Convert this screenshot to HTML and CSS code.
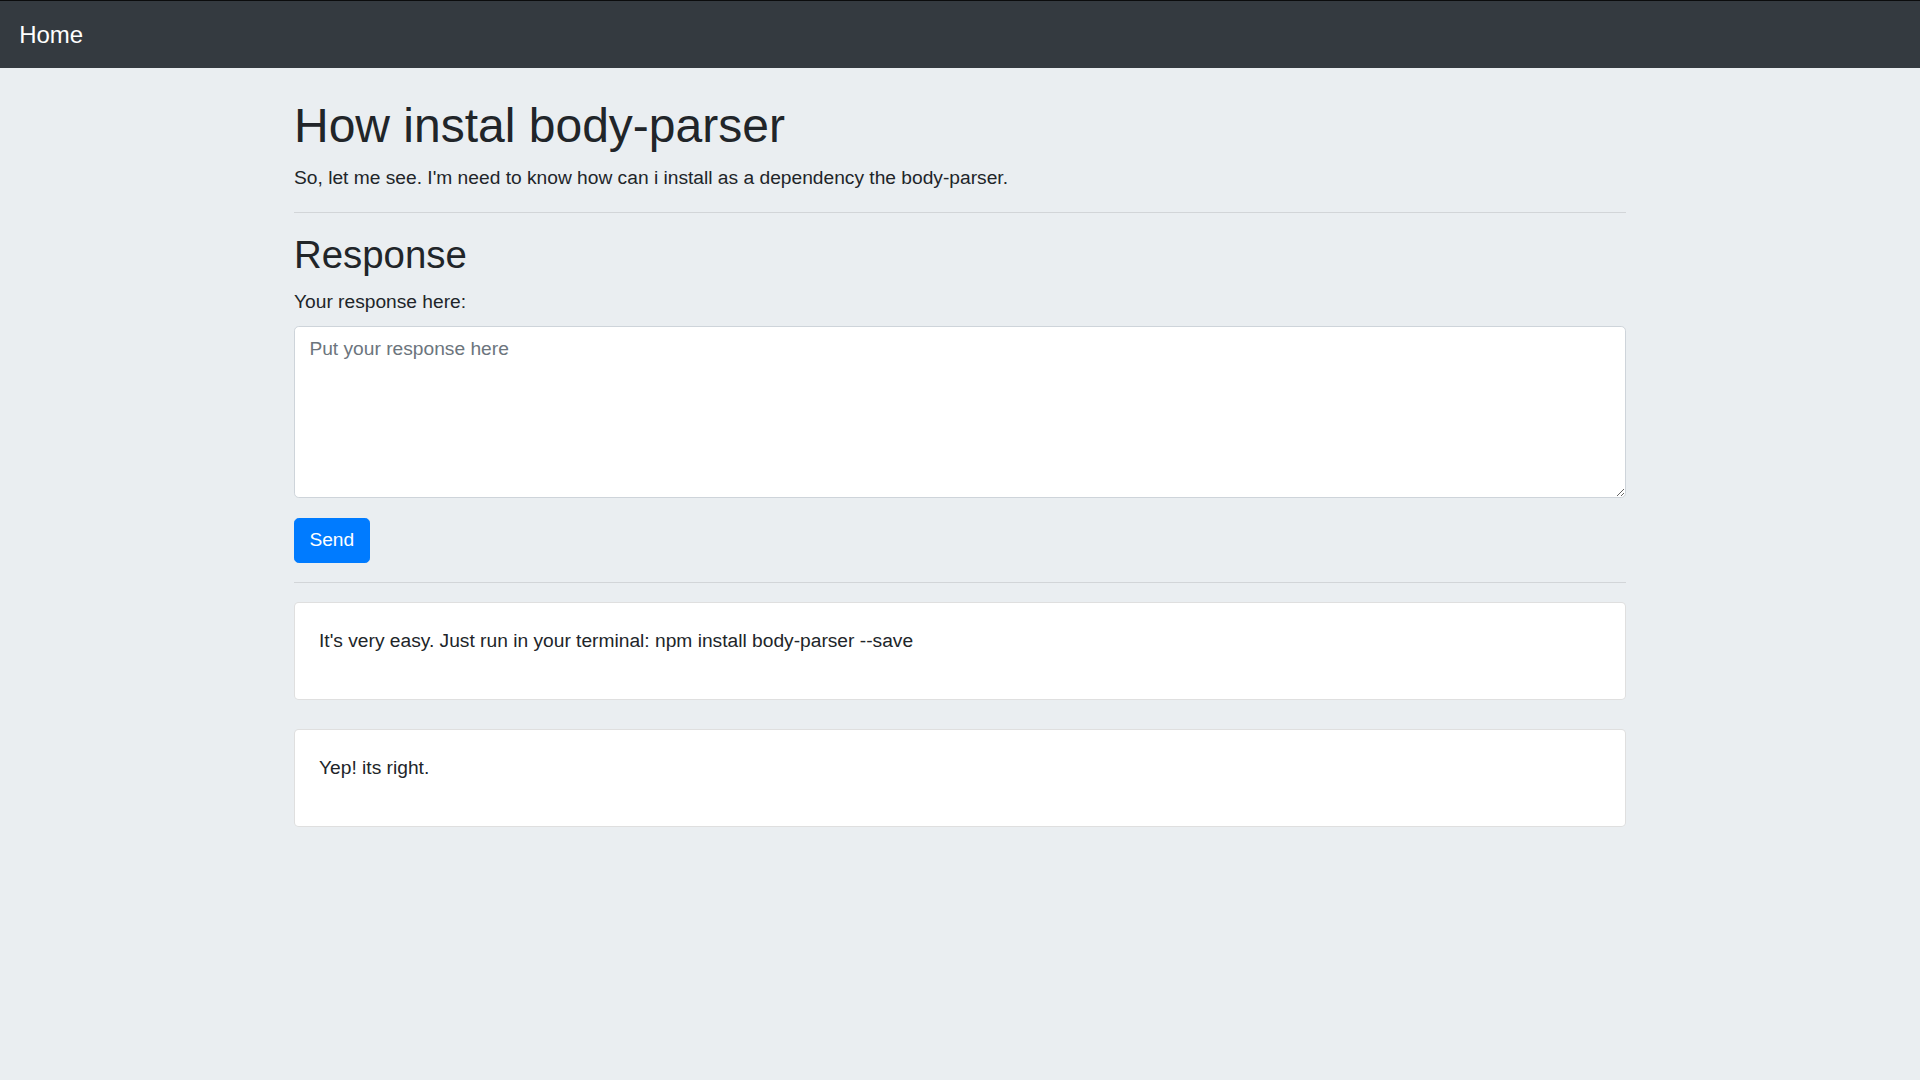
FILE: index.html
```html
<!DOCTYPE html>
<html lang="en">
<head>
<meta charset="utf-8">
<title>How instal body-parser</title>
<link rel="stylesheet" href="styles.css">
</head>
<body>
<nav class="navbar">
  <a class="navbar-brand" href="#">Home</a>
</nav>
<main class="container">
  <h1 class="title">How instal body-parser</h1>
  <p class="text">So, let me see. I'm need to know how can i install as a dependency the body-parser.</p>
  <hr class="divider">
  <h2 class="subtitle">Response</h2>
  <form class="form">
    <div class="form-group">
      <label class="label" for="response">Your response here:</label>
      <textarea class="form-control" id="response" placeholder="Put your response here"></textarea>
    </div>
    <button class="btn" type="button">Send</button>
  </form>
  <hr class="divider">
  <div class="card">
    <div class="card-body">
      <p class="text">It's very easy. Just run in your terminal: npm install body-parser --save</p>
    </div>
  </div>
  <div class="card">
    <div class="card-body">
      <p class="text">Yep! its right.</p>
    </div>
  </div>
</main>
</body>
</html>
```

FILE: styles.css
```css
* {
  box-sizing: border-box;
}

html, body {
  margin: 0;
  padding: 0;
}

body {
  background: #eaeef1;
  color: #212529;
  font-family: "Liberation Sans", Arial, sans-serif;
  font-size: 19.2px;
  line-height: 1.5;
  min-height: 1080px;
}

.navbar {
  background: #343a40;
  border-top: 1px solid #0b0c0d;
  padding: 9.6px 19.2px;
  display: flex;
  align-items: center;
}

.navbar-brand {
  color: #fff;
  text-decoration: none;
  font-size: 24px;
  line-height: 1.5;
  padding: 6px 0;
}

.container {
  max-width: 1368px;
  margin: 28.8px auto 0;
  padding: 0 18px;
}

.title {
  font-size: 48px;
  font-weight: 500;
  line-height: 1.2;
  margin: 0 0 9.6px;
}

.subtitle {
  font-size: 38.4px;
  font-weight: 500;
  line-height: 1.2;
  margin: 0 0 9.6px;
}

.text {
  margin: 0 0 19.2px;
}

.divider {
  border: 0;
  border-top: 1px solid rgba(0, 0, 0, 0.1);
  margin: 19.2px 0;
  height: 0;
}

.form {
  margin: 0;
}

.form-group {
  margin-bottom: 19.2px;
}

.label {
  display: inline-block;
  margin-bottom: 9.6px;
}

.form-control {
  display: block;
  width: 100%;
  height: 172px;
  padding: 7.2px 14.4px;
  font-family: "Liberation Sans", Arial, sans-serif;
  font-size: 19.2px;
  line-height: 1.5;
  color: #495057;
  background: #fff;
  border: 1px solid #ced4da;
  border-radius: 4.8px;
  resize: vertical;
  margin: 0;
}

.form-control::placeholder {
  color: #6c757d;
  opacity: 1;
}

.btn {
  display: inline-block;
  font-family: "Liberation Sans", Arial, sans-serif;
  font-size: 19.2px;
  line-height: 1.5;
  padding: 7.2px 14.4px;
  color: #fff;
  background: #007bff;
  border: 1px solid #007bff;
  border-radius: 4.8px;
  cursor: pointer;
  margin: 0;
}

.card {
  background: #fff;
  border: 1px solid rgba(0, 0, 0, 0.125);
  border-radius: 4.8px;
  margin-bottom: 28.8px;
}

.card-body {
  padding: 24px;
}
```
